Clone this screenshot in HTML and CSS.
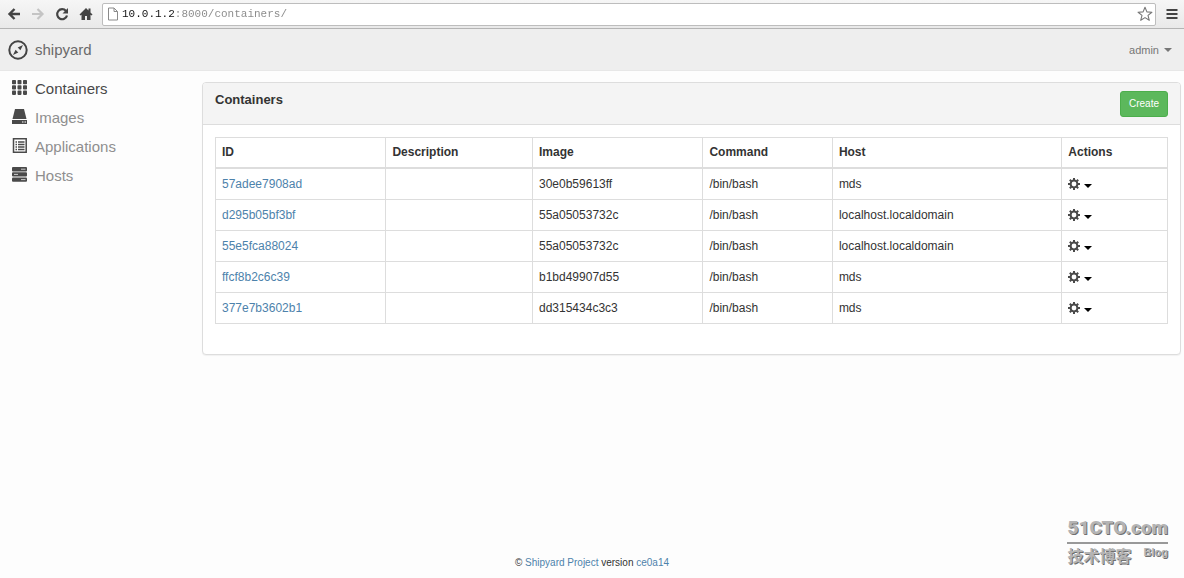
FILE: index.html
```html
<!DOCTYPE html>
<html lang="en">
<head>
<meta charset="utf-8">
<title>shipyard</title>
<link rel="stylesheet" href="styles.css">
</head>
<body>
<svg class="sprites" aria-hidden="true">
  <symbol id="gear" viewBox="0 0 12 12">
    <g stroke="#4a4a4a" stroke-width="2"><path d="M6 0v12M0 6h12M1.8 1.8l8.4 8.4M10.2 1.8l-8.4 8.4"/></g>
    <circle cx="6" cy="6" r="3.4" fill="#fff" stroke="#4a4a4a" stroke-width="2"/>
  </symbol>
</svg>

<div class="toolbar">
  <button class="tool" aria-label="Back"><svg width="14" height="14" viewBox="0 0 14 14"><path d="M7.5 2L2.5 7l5 5M2.5 7H13" fill="none" stroke="#444" stroke-width="2.4"/></svg></button>
  <button class="tool" aria-label="Forward"><svg width="14" height="14" viewBox="0 0 14 14"><path d="M6.500 2l5 5-5 5M11.500 7H1" fill="none" stroke="#c4c4c4" stroke-width="2.200"/></svg></button>
  <button class="tool" aria-label="Reload"><svg width="14" height="14" viewBox="0 0 14 14"><path d="M11 4A5 5 0 1 0 12 8.500" fill="none" stroke="#444" stroke-width="2.200"/><path d="M13 1v5.500H7.500z" fill="#444"/></svg></button>
  <button class="tool" aria-label="Home"><svg width="14" height="14" viewBox="0 0 14 14"><path d="M7 1L.500 7.500l1 1L2.500 7.700V13H6V9h2v4h3.500V7.700l1 .800 1-1-2-2V1.500h-2v2z" fill="#444"/></svg></button>
  <div class="address">
    <svg width="10" height="14" viewBox="0 0 10 14"><path d="M.500 1h5.500l3.500 3.500V13H.500zM6 1v3.500h3.500" fill="#fff" stroke="#8a8a8a"/></svg>
    <input class="url" type="text" aria-label="Address" spellcheck="false" value="10.0.1.2:8000/containers/">
    <button class="tool tool-star" aria-label="Bookmark"><svg width="16" height="16" viewBox="0 0 16 16"><path d="M8 1.200l1.900 4.700 5 .300-3.900 3.200 1.300 4.900L8 11.600l-4.300 2.700L5 9.400 1.100 6.200l5-.300z" fill="#fff" stroke="#777" stroke-width="1.100" stroke-linejoin="round"/></svg></button>
  </div>
  <button class="tool tool-menu" aria-label="Menu"><svg width="12" height="12" viewBox="0 0 12 12"><path d="M.500 2h11M.500 6h11M.500 10h11" stroke="#444" stroke-width="2.200"/></svg></button>
</div>

<header class="navbar">
  <a class="brand" href="#">
    <svg width="20" height="20" viewBox="0 0 20 20"><circle cx="10" cy="10" r="8.700" fill="none" stroke="#444" stroke-width="2"/><path d="M15 5l-2.600 5.300-2.700-2.700zM5 15l2.600-5.300 2.700 2.700z" fill="#444"/><circle cx="10" cy="10" r="1.200" fill="#eee"/></svg>
    shipyard
  </a>
  <button class="account">admin <span class="caret"></span></button>
</header>

<div class="content">
  <nav class="sidebar">
    <a class="side-link active" href="#"><svg width="15" height="15" viewBox="0 0 15 15" fill="#4a4a4a"><rect x="0" y="0" width="4" height="4.300" rx=".8"/><rect x="5.500" y="0" width="4" height="4.300" rx=".8"/><rect x="11" y="0" width="4" height="4.300" rx=".8"/><rect x="0" y="5.300" width="4" height="4.300" rx=".8"/><rect x="5.500" y="5.300" width="4" height="4.300" rx=".8"/><rect x="11" y="5.300" width="4" height="4.300" rx=".8"/><rect x="0" y="10.600" width="4" height="4.300" rx=".8"/><rect x="5.500" y="10.600" width="4" height="4.300" rx=".8"/><rect x="11" y="10.600" width="4" height="4.300" rx=".8"/></svg>Containers</a>
    <a class="side-link" href="#"><svg width="15" height="15" viewBox="0 0 15 15"><path d="M3 0h9l2.500 10H.500z" fill="#4a4a4a"/><path d="M0 11h15v4H0z" fill="#4a4a4a"/><path d="M10 13h1.500M12.500 13H14" stroke="#fff"/></svg>Images</a>
    <a class="side-link" href="#"><svg width="15" height="15" viewBox="0 0 15 15"><path d="M1.500 .800h12.700v13.400H1.500z" fill="#fff" stroke="#4a4a4a" stroke-width="1.500"/><path d="M3.500 4h1.500M3.500 6.500h1.500M3.500 9h1.500M3.500 11.500h1.500M6 4h6.500M6 6.500h6.500M6 9h6.500M6 11.500h6.500" stroke="#4a4a4a" stroke-width="1.300"/></svg>Applications</a>
    <a class="side-link" href="#"><svg width="15" height="15" viewBox="0 0 15 15"><g fill="#4a4a4a"><rect width="15" height="4.400" rx="1"/><rect y="5.200" width="15" height="4.400" rx="1"/><rect y="10.400" width="15" height="4.400" rx="1"/></g><path d="M9 2.200h4.500M2 7.400h4M9 12.600h4.500" stroke="#ccc"/></svg>Hosts</a>
  </nav>

  <main class="panel">
    <div class="panel-heading">
      <h1 class="panel-title">Containers</h1>
      <button class="create">Create</button>
    </div>
    <div class="panel-body">
      <table class="grid">
        <colgroup><col class="col-id"><col class="col-description"><col class="col-image"><col class="col-command"><col class="col-host"><col class="col-actions"></colgroup>
        <thead>
          <tr><th>ID</th><th>Description</th><th>Image</th><th>Command</th><th>Host</th><th>Actions</th></tr>
        </thead>
        <tbody>
          <tr><td><a href="#">57adee7908ad</a></td><td></td><td>30e0b59613ff</td><td>/bin/bash</td><td>mds</td><td><button class="action" aria-label="Actions"><svg width="12" height="12"><use href="#gear"/></svg><span class="caret"></span></button></td></tr>
          <tr><td><a href="#">d295b05bf3bf</a></td><td></td><td>55a05053732c</td><td>/bin/bash</td><td>localhost.localdomain</td><td><button class="action" aria-label="Actions"><svg width="12" height="12"><use href="#gear"/></svg><span class="caret"></span></button></td></tr>
          <tr><td><a href="#">55e5fca88024</a></td><td></td><td>55a05053732c</td><td>/bin/bash</td><td>localhost.localdomain</td><td><button class="action" aria-label="Actions"><svg width="12" height="12"><use href="#gear"/></svg><span class="caret"></span></button></td></tr>
          <tr><td><a href="#">ffcf8b2c6c39</a></td><td></td><td>b1bd49907d55</td><td>/bin/bash</td><td>mds</td><td><button class="action" aria-label="Actions"><svg width="12" height="12"><use href="#gear"/></svg><span class="caret"></span></button></td></tr>
          <tr><td><a href="#">377e7b3602b1</a></td><td></td><td>dd315434c3c3</td><td>/bin/bash</td><td>mds</td><td><button class="action" aria-label="Actions"><svg width="12" height="12"><use href="#gear"/></svg><span class="caret"></span></button></td></tr>
        </tbody>
      </table>
    </div>
  </main>
</div>

<footer class="footer">© <a href="#">Shipyard Project</a> version <a href="#">ce0a14</a></footer>

<div class="watermark">
  <div class="mark-name">51CTO.com</div>
  <div class="mark-sub"><span class="mark-cn" lang="zh">技术博客</span><span class="mark-blog">Blog</span></div>
</div>
</body>
</html>
```
FILE: styles.css
```css
* {
  box-sizing: border-box;
}

body {
  position: relative;
  display: flex;
  flex-direction: column;
  min-height: 100vh;
  margin: 0;
  background: #fdfdfd;
  color: #333;
  font: 12px/16px "Liberation Sans", Arial, sans-serif;
}

a {
  color: #4d82ab;
  text-decoration: none;
}

button {
  padding: 0;
  border: 0;
  background: none;
  color: inherit;
  font: inherit;
  cursor: pointer;
}

svg {
  display: block;
  flex: none;
}

.sprites {
  position: absolute;
  width: 0;
  height: 0;
}

.toolbar {
  display: flex;
  align-items: center;
  gap: 10px;
  height: 29px;
  padding: 0 6px 0 7px;
  border-bottom: 1px solid #b4b4b4;
  background: linear-gradient(#f6f6f6, #e9e9e9);
}

.address {
  display: flex;
  flex: 1;
  align-items: center;
  gap: 4px;
  height: 23px;
  margin-left: -1px;
  padding: 0 2px 0 5px;
  border: 1px solid #bdbdbd;
  border-radius: 2px;
  background: #fff;
}

.url {
  flex: 1;
  min-width: 0;
  padding: 0;
  border: 0;
  outline: 0;
  background: linear-gradient(90deg, #111 8ch, #888 8ch);
  background-clip: text;
  color: transparent;
  caret-color: #111;
  font: 11px/16px "Liberation Mono", monospace;
}

.navbar {
  display: flex;
  align-items: center;
  justify-content: space-between;
  height: 42px;
  padding: 0 12px 0 8px;
  border-bottom: 1px solid #e7e7e7;
  background: #eee;
}

.brand {
  display: flex;
  align-items: center;
  gap: 7px;
  color: #6a6a6a;
  font-size: 15px;
}

.account {
  display: flex;
  align-items: center;
  gap: 5px;
  color: #777;
  font-size: 11px;
}

.caret {
  border: 4px solid transparent;
  border-top: 4px solid currentColor;
  border-bottom: 0;
}

.content {
  display: flex;
  flex: 1;
  align-items: flex-start;
  padding: 9px 3px 0 12px;
}

.sidebar {
  display: flex;
  flex: none;
  flex-direction: column;
  gap: 11px;
  width: 190px;
  font-size: 15px;
  line-height: 18px;
}

.side-link {
  display: flex;
  align-items: flex-start;
  gap: 8px;
  color: #8f8f8f;
}

.sidebar .active {
  color: #484848;
}

.panel {
  flex: 1;
  margin-top: 2px;
  border: 1px solid #ddd;
  border-radius: 4px;
  background: #fff;
  box-shadow: 0 1px 1px #0000000d;
}

.panel-heading {
  display: flex;
  align-items: flex-start;
  justify-content: space-between;
  padding: 8px 12px 7px;
  border-bottom: 1px solid #ddd;
  border-radius: 3px 3px 0 0;
  background: #f4f4f4;
}

.panel-title {
  margin: 0;
  font-size: 13px;
  line-height: 18px;
}

.create {
  height: 26px;
  padding: 0 8px;
  border: 1px solid #4cae4c;
  border-radius: 3px;
  background: #5cb85c;
  color: #fff;
  font-size: 10px;
}

.panel-body {
  padding: 12px 12px 30px;
}

.grid {
  width: 100%;
  border-collapse: collapse;
  table-layout: fixed;
}

.col-id,
.col-image {
  width: 17.9%;
}

.col-description {
  width: 15.4%;
}

.col-command {
  width: 13.6%;
}

.col-host {
  width: 24.1%;
}

.grid th,
.grid td {
  padding: 7px 6px;
  border: 1px solid #ddd;
  text-align: left;
}

.grid th {
  padding-top: 6px;
  border-bottom-width: 2px;
}

.action {
  display: flex;
  align-items: center;
  gap: 4px;
  height: 16px;
}

.action .caret {
  margin-top: 3px;
  color: #000;
}

.footer {
  padding-bottom: 7px;
  font-size: 10px;
  text-align: center;
}

.watermark {
  position: absolute;
  right: 16px;
  bottom: 12px;
  color: #b4b4b4;
  font-weight: bold;
  text-shadow: 1px 1px 0 #707070;
}

.mark-name {
  border-bottom: 2px solid #999;
  font: 900 19px/28px Roboto, "Liberation Sans", sans-serif;
}

.mark-sub {
  display: flex;
  justify-content: space-between;
}

.mark-cn {
  font: bold 16px/22px "Noto Sans CJK SC", sans-serif;
}

.mark-blog {
  font-size: 11px;
}
```
